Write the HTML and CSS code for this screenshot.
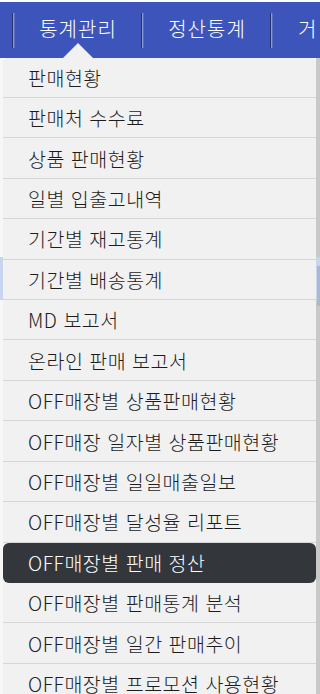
FILE: index.html
```html
<!DOCTYPE html>
<html lang="ko">
<head>
<meta charset="utf-8">
<title>통계관리</title>
<link rel="stylesheet" href="styles.css">
</head>
<body>
<div class="top-strip"></div>
<nav class="nav">
  <span class="nav-sep"></span>
  <a class="nav-item active">통계관리</a>
  <span class="nav-sep"></span>
  <a class="nav-item">정산통계</a>
  <span class="nav-sep"></span>
  <a class="nav-item nav-item-last">거래처관리</a>
</nav>
<div class="page">
  <ul class="dropdown">
    <li class="menu-item">판매현황</li>
    <li class="menu-item">판매처 수수료</li>
    <li class="menu-item">상품 판매현황</li>
    <li class="menu-item">일별 입출고내역</li>
    <li class="menu-item">기간별 재고통계</li>
    <li class="menu-item">기간별 배송통계</li>
    <li class="menu-item">MD 보고서</li>
    <li class="menu-item">온라인 판매 보고서</li>
    <li class="menu-item">OFF매장별 상품판매현황</li>
    <li class="menu-item">OFF매장 일자별 상품판매현황</li>
    <li class="menu-item">OFF매장별 일일매출일보</li>
    <li class="menu-item">OFF매장별 달성율 리포트</li>
    <li class="menu-item selected">OFF매장별 판매 정산</li>
    <li class="menu-item">OFF매장별 판매통계 분석</li>
    <li class="menu-item">OFF매장별 일간 판매추이</li>
    <li class="menu-item">OFF매장별 프로모션 사용현황</li>
  </ul>
</div>
</body>
</html>
```
FILE: styles.css
```css
html, body {
  margin: 0;
  padding: 0;
  background: #ffffff;
  overflow: hidden;
  font-family: "Noto Sans CJK KR", "Noto Sans", sans-serif;
}

.top-strip {
  height: 2px;
  background: #ffffff;
}

.nav {
  height: 56px;
  background: #3d55bb;
  display: flex;
  align-items: center;
  padding-left: 12px;
  white-space: nowrap;
  overflow: hidden;
}

.nav-sep {
  flex: none;
  width: 3px;
  height: 35px;
  background: linear-gradient(to right, #27316e 0 1px, #8a98d4 1px 2px, #5a6cc0 2px 3px);
}

.nav-item {
  flex: none;
  width: 126px;
  text-align: center;
  color: #ffffff;
  font-size: 20px;
  font-weight: 300;
  letter-spacing: 1px;
  line-height: 24px;
  position: relative;
  top: -1px;
}

.nav-item-last {
  width: auto;
  text-align: left;
  padding-left: 25px;
  letter-spacing: 3px;
}

.page {
  position: relative;
  height: 636px;
  background:
    linear-gradient(to bottom, transparent 0 199px, #c7d6ee 199px 242px, transparent 242px),
    linear-gradient(to right, #f7f7f7 0 3px, #ffffff 3px 316px, #c9c9c9 316px);
}

.page::after {
  content: "";
  position: absolute;
  right: 0;
  top: 208px;
  width: 3px;
  height: 40px;
  background: #a9b9d2;
}

.dropdown {
  position: absolute;
  left: 3px;
  top: -0.5px;
  width: 313px;
  margin: 0;
  padding: 0;
  list-style: none;
  background: #f1f1f1;
  border-radius: 4px 4px 0 0;
}

.dropdown::before {
  content: "";
  position: absolute;
  left: 60px;
  top: -15px;
  width: 0;
  height: 0;
  border-left: 15px solid transparent;
  border-right: 15px solid transparent;
  border-bottom: 15px solid #f1f1f1;
}

.menu-item {
  box-sizing: border-box;
  height: 40.43px;
  display: flex;
  align-items: center;
  padding-left: 25px;
  font-size: 19.5px;
  font-weight: 300;
  letter-spacing: 0.5px;
  color: #1c1c1c;
  border-bottom: 1px solid #d6d6d6;
  white-space: nowrap;
}

.menu-item.selected {
  background: #33363b;
  color: #ffffff;
  border-radius: 6px;
  border-bottom-color: transparent;
}
```
